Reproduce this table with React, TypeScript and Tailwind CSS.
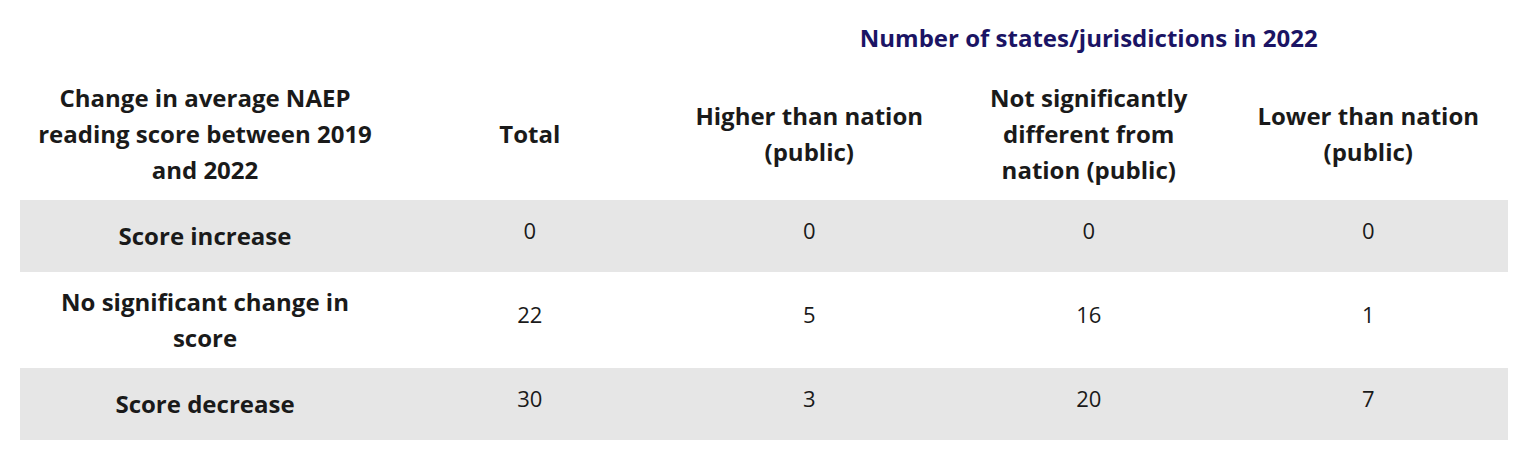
import React from "react";

const rows = [
  { label: "Score increase", vals: ["0", "0", "0", "0"], gray: true, h: "h-[72px]" },
  { label: "No significant change in score", vals: ["22", "5", "16", "1"], gray: false, h: "h-[96px]" },
  { label: "Score decrease", vals: ["30", "3", "20", "7"], gray: true, h: "h-[72px]" },
];

export default function App() {
  return (
    <div className="w-[1515px] h-[457px] bg-white" style={{ fontFamily: '"Open Sans", sans-serif' }}>
      <div className="pl-[20px] pt-0">
        <table className="table-fixed w-[1488px] border-collapse text-[#1a1a1a]">
          <colgroup>
            <col className="w-[370px]" />
            <col />
            <col />
            <col />
            <col />
          </colgroup>
          <thead>
            <tr className="h-[76px]">
              <th />
              <th />
              <th colSpan={3} className="text-center align-middle font-bold text-[24px] leading-[36px] text-[#1b1464] pb-0">
                Number of states/jurisdictions in 2022
              </th>
            </tr>
            <tr className="h-[124px]">
              <th className="text-center align-middle font-bold text-[24px] leading-[36px] px-[16px] pb-[8px]">
                Change in average NAEP reading score between 2019 and 2022
              </th>
              <th className="text-center align-middle font-bold text-[24px] leading-[36px] px-[16px] pb-[8px]">Total</th>
              <th className="text-center align-middle font-bold text-[24px] leading-[36px] px-[16px] pb-[8px]">
                Higher than nation (public)
              </th>
              <th className="text-center align-middle font-bold text-[24px] leading-[36px] px-[40px] pb-[8px]">
                Not significantly different from nation (public)
              </th>
              <th className="text-center align-middle font-bold text-[24px] leading-[36px] px-[16px] pb-[8px]">
                Lower than nation (public)
              </th>
            </tr>
          </thead>
          <tbody>
            {rows.map((r) => (
              <tr key={r.label} className={`${r.h} ${r.gray ? "bg-[#e6e6e6]" : "bg-white"}`}>
                <th className="text-center align-middle font-bold text-[24px] leading-[36px] px-[40px]">{r.label}</th>
                {r.vals.map((v, i) => (
                  <td key={i} className="text-center align-middle text-[22px] leading-[32px] pb-[12px]">
                    {v}
                  </td>
                ))}
              </tr>
            ))}
          </tbody>
        </table>
      </div>
    </div>
  );
}
